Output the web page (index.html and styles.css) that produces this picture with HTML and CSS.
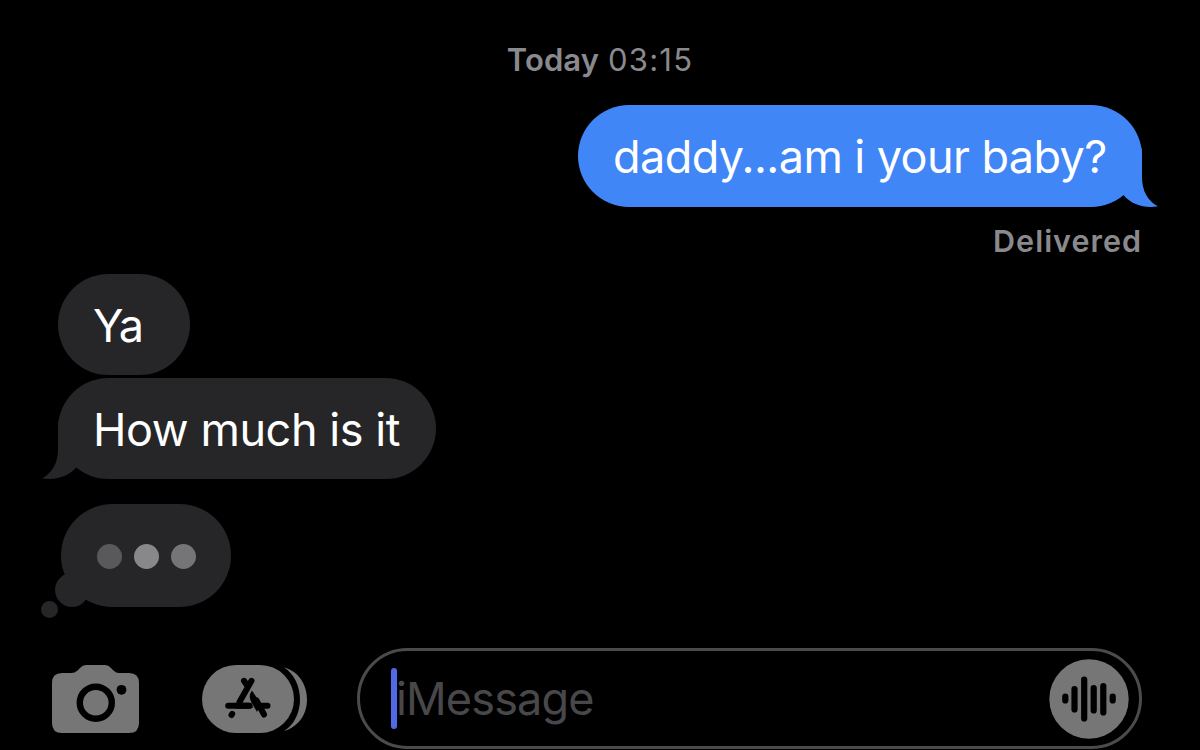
FILE: index.html
```html
<!DOCTYPE html>
<html lang="en">
<head>
<meta charset="utf-8">
<title>Messages</title>
<link rel="stylesheet" href="styles.css">
</head>
<body>
<main class="screen">
  <div class="timestamp"><strong>Today</strong><span>03:15</span></div>
  <section class="thread">
    <div class="bubble sent"><span class="txt-sent">daddy...am i your baby?</span>
      <svg class="tail tail-right" width="48" height="60" viewBox="0 0 48 60"><path d="M20 0L29.600 -2Q30 2 30 6V27C30 41 36 51.500 46 56.200C34 58.500 20 55.500 11.500 45Z" fill="#4086f7"/></svg>
    </div>
    <div class="delivered">Delivered</div>
    <div class="bubble received first"><span class="txt-ya">Ya</span></div>
    <div class="bubble received second"><span class="txt-how">How much is it</span>
      <svg class="tail tail-left" width="48" height="60" viewBox="0 0 48 60"><path d="M28 0L18.400 -2Q18 2 18 6V27C18 41 12 51.500 2 56.200C14 58.500 28 55.500 36.500 45Z" fill="#262628"/></svg>
    </div>
    <div class="typing">
      <i class="dot dot-a"></i><i class="dot dot-b"></i><i class="dot dot-c"></i>
      <i class="puff puff-large"></i><i class="puff puff-small"></i>
    </div>
  </section>
  <footer class="compose">
    <svg class="camera" width="88" height="70" viewBox="0 0 88 70">
      <path d="M10 8H19Q23 8 25.500 5.500L28 3Q30.500 0 34 0H53Q56.500 0 59 3L61.500 5.500Q64 8 67 8H77Q87 8 87 18V58Q87 68 77 68H10Q0 68 0 58V18Q0 8 10 8Z" fill="#767676"/>
      <circle cx="43.800" cy="37.700" r="16" fill="none" stroke="#000" stroke-width="6.400"/>
      <circle cx="69.500" cy="24.800" r="4.900" fill="#000"/>
    </svg>
    <svg class="apps" width="106" height="70" viewBox="0 0 106 70">
      <path d="M82 2.500C96 6 105 19 105 34.500S96 62 82 66C92 60 98 48 98 34.500S92 8.500 82 2.500Z" fill="#767676"/>
      <rect x="0" y="0" width="92" height="68" rx="34" fill="#767676"/>
      <g fill="none" stroke="#000" stroke-width="6" stroke-linecap="round">
        <path d="M49.500 15.800L37.500 37M42 15.800L45.500 21M26.200 40.800H47.500M60 40.800H65.500M30.200 48.800L29.500 50M54.500 35.500L62 49.500"/>
      </g>
      <path d="M50 25.500Q45.800 31 49.300 37.200L55 47L58.500 38.500Z" fill="#000"/>
      <path d="M34 38L39.500 37.800H46.500Q49.500 38 51 42.500L48 43.800H34Z" fill="#000"/>
    </svg>
    <div class="field">
      <i class="caret"></i><span class="placeholder">iMessage</span>
      <svg class="voice" width="80" height="80" viewBox="0 0 80 80">
        <circle cx="40" cy="40" r="39.700" fill="#767676"/>
        <path d="M16.300 37.500V41.500M25.500 30V50.500M35.200 20.500V59.500M44.700 29V51.500M54.300 27V53.500M63.700 37.500V41.500" fill="none" stroke="#000" stroke-width="6.200" stroke-linecap="round"/>
      </svg>
    </div>
  </footer>
</main>
</body>
</html>
```
FILE: styles.css
```css
* { box-sizing: border-box; }
body {
  margin: 0;
  background: #000;
  font-family: Inter, "Liberation Sans", sans-serif;
}
.screen {
  width: 1200px;
  height: 750px;
  overflow: hidden;
  display: flex;
  flex-direction: column;
  padding-top: 40px;
}
.timestamp {
  display: flex;
  justify-content: center;
  gap: 9px;
  height: 40px;
  line-height: 40px;
  font-size: 31px;
  color: #8a8a8e;
}
.timestamp strong { font-weight: 600; letter-spacing: 0.1px; }
.timestamp span { letter-spacing: 1.2px; }
.thread {
  display: flex;
  flex-direction: column;
  padding: 25px 58px 0;
}
.bubble {
  position: relative;
  height: 102px;
  border-radius: 51px;
  padding-left: 35px;
  font-size: 45px;
  line-height: 104px;
  color: #fff;
  white-space: nowrap;
}
.sent { align-self: flex-end; width: 564px; background: #4086f7; }
.received { background: #262628; height: 101px; }
.first { width: 132px; margin-top: 17px; line-height: 103px; }
.second { width: 378px; margin-top: 3px; }
.txt-sent { letter-spacing: -0.58px; }
.txt-ya { letter-spacing: -1.5px; }
.txt-how { letter-spacing: -0.42px; }
.tail { position: absolute; bottom: -3px; overflow: visible; }
.tail-right { right: -18px; }
.tail-left { left: -18px; }
.delivered {
  align-self: flex-end;
  margin-top: 15px;
  height: 35px;
  line-height: 37px;
  font-size: 30.5px;
  font-weight: 600;
  letter-spacing: 1px;
  color: #8a8a8e;
}
.typing {
  position: relative;
  display: flex;
  align-items: center;
  justify-content: center;
  gap: 12px;
  width: 170px;
  height: 103px;
  margin: 25px 0 0 3px;
  border-radius: 51.5px;
  background: #262628;
}
.dot { position: relative; top: 1px; width: 25px; height: 25px; border-radius: 50%; }
.dot-a { background: #59595b; }
.dot-b { background: #88888a; }
.dot-c { background: #757577; }
.puff { position: absolute; border-radius: 50%; background: #262628; }
.puff-large { width: 34px; height: 34px; left: -6px; top: 69px; }
.puff-small { width: 17px; height: 17px; left: -20px; top: 97px; }
.compose {
  display: flex;
  align-items: flex-start;
  margin-top: 41px;
  padding-left: 52px;
}
.camera { margin-top: 17px; }
.apps { margin: 17px 0 0 62px; }
.field {
  display: flex;
  align-items: center;
  width: 785px;
  height: 101px;
  margin-left: 49px;
  padding: 0 10px 0 31px;
  border: 3px solid #4b4b4d;
  border-radius: 51px;
}
.caret { width: 6px; height: 61px; border-radius: 3px; background: #5169e4; }
.placeholder {
  margin-left: -1px;
  font-size: 45px;
  line-height: 60px;
  letter-spacing: -0.85px;
  color: #48484a;
}
.voice { margin-left: auto; }
```
